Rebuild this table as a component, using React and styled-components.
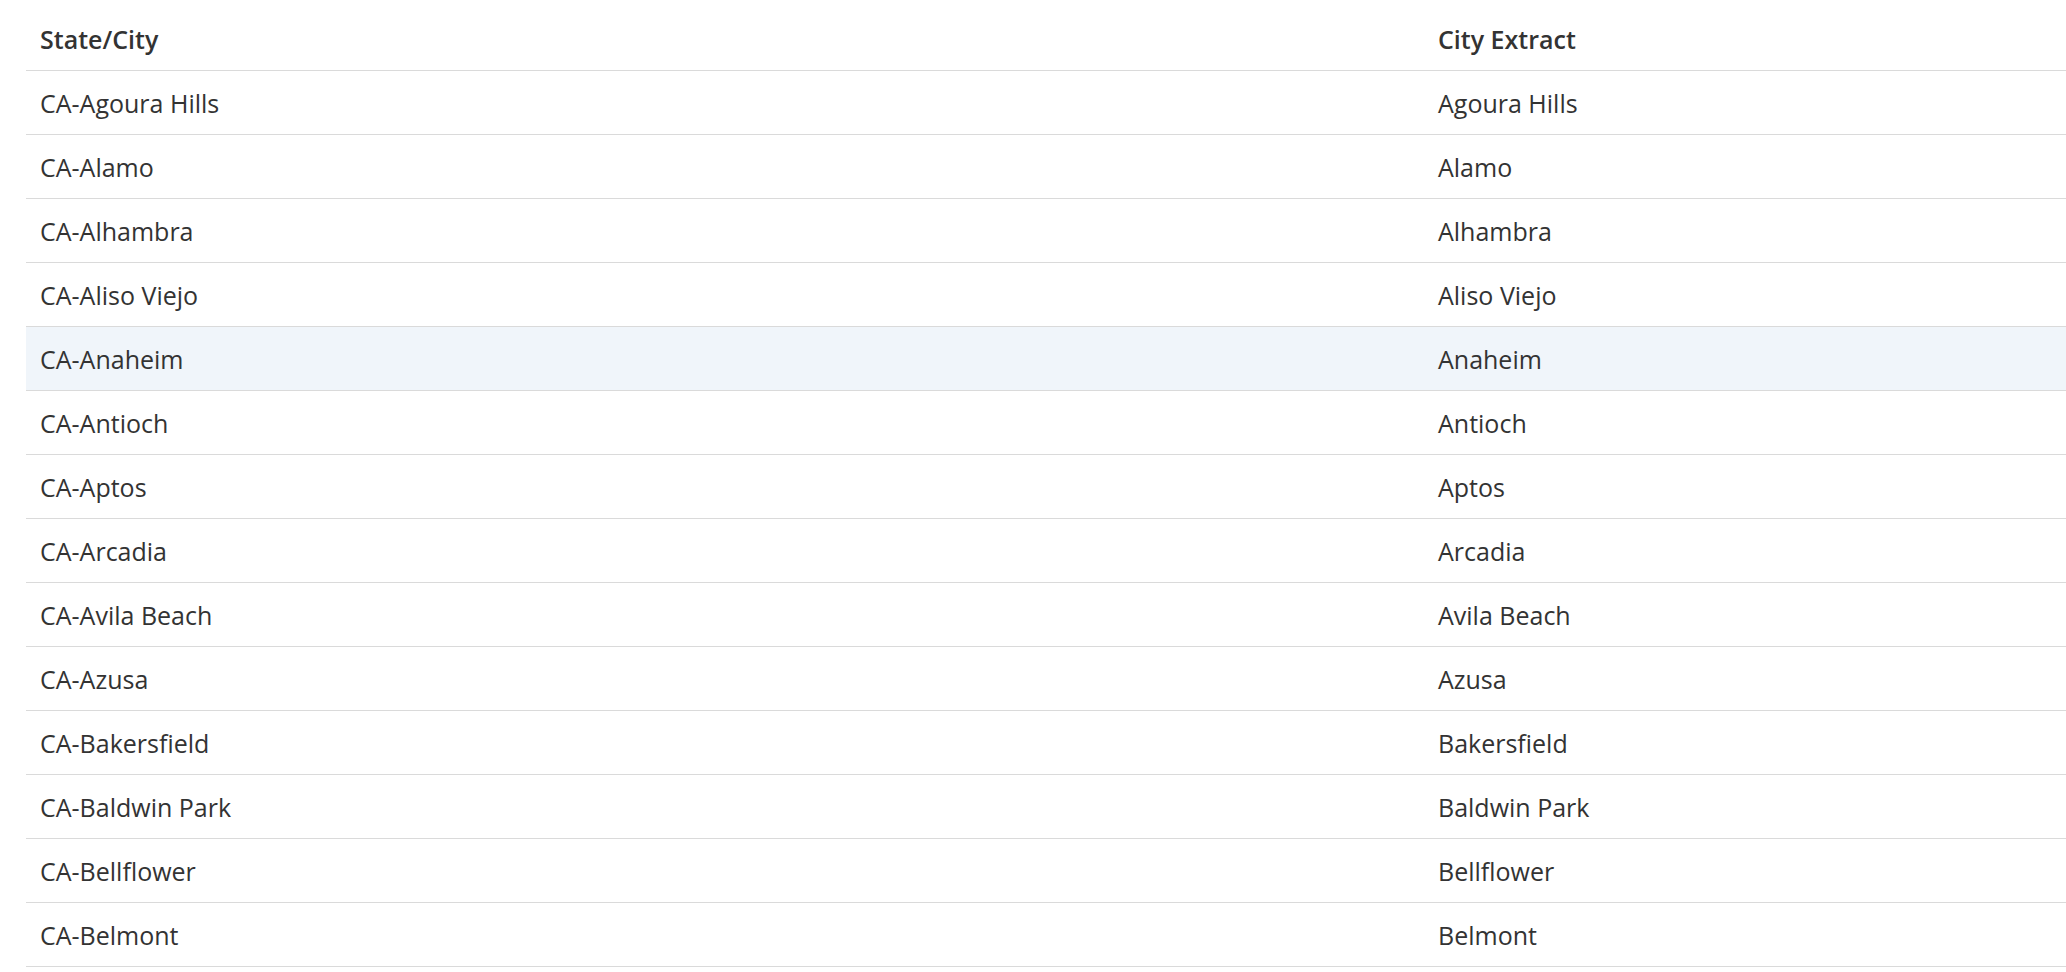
import React from 'react';
import styled, { createGlobalStyle } from 'styled-components';

const GlobalStyle = createGlobalStyle`
  html, body {
    margin: 0;
    padding: 0;
    background: #ffffff;
  }
  body {
    font-family: "Open Sans", "Noto Sans", sans-serif;
    color: #333333;
    overflow: hidden;
  }
`

const Pagina = styled.div`
  padding-left: 26px;
`

const Tabela = styled.div`
  display: flex;
  flex-direction: column;
  width: 100%;
`

const Linha = styled.div`
  display: grid;
  grid-template-columns: 1398px 1fr;
  height: ${props => props.cabecalho ? '70px' : '63px'};
  border-bottom: 1px solid #dadada;
  background-color: ${props => props.destaque ? '#f0f5fa' : 'transparent'};
`

const Celula = styled.div`
  display: flex;
  align-items: center;
  padding-left: 14px;
  padding-top: ${props => props.cabecalho ? '7px' : '0'};
  font-size: 25px;
  font-weight: ${props => props.cabecalho ? 600 : 400};
  color: #333333;
  white-space: nowrap;
`

const cidades = [
  'Agoura Hills',
  'Alamo',
  'Alhambra',
  'Aliso Viejo',
  'Anaheim',
  'Antioch',
  'Aptos',
  'Arcadia',
  'Avila Beach',
  'Azusa',
  'Bakersfield',
  'Baldwin Park',
  'Bellflower',
  'Belmont',
]

function App() {
  return (
    <Pagina>
      <GlobalStyle />
      <Tabela>
        <Linha cabecalho>
          <Celula cabecalho>State/City</Celula>
          <Celula cabecalho>City Extract</Celula>
        </Linha>
        {cidades.map((cidade) => (
          <Linha key={cidade} destaque={cidade === 'Anaheim'}>
            <Celula>CA-{cidade}</Celula>
            <Celula>{cidade}</Celula>
          </Linha>
        ))}
      </Tabela>
    </Pagina>
  )
}

export default App;
